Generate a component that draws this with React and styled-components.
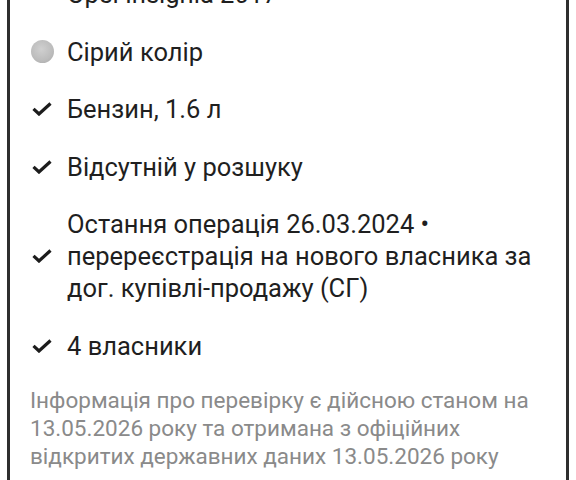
import styled, { createGlobalStyle } from 'styled-components';

const Global = createGlobalStyle`
  html, body {
    margin: 0;
    padding: 0;
    background: #ffffff;
    overflow: hidden;
  }
  body {
    font-family: Roboto, "Noto Sans", "Liberation Sans", sans-serif;
  }
`;

const Card = styled.div`
  margin: -22px 7px 0 7px;
  border-left: 3px solid #2f2f2f;
  border-right: 3px solid #2f2f2f;
  padding: 0 12px 20px 20px;
  box-sizing: border-box;
  height: 540px;
`;

const List = styled.ul`
  list-style: none;
  margin: 0;
  padding: 0;
  display: flex;
  flex-direction: column;
  gap: 25.5px;
`;

const Row = styled.li`
  display: flex;
  align-items: center;
  gap: 13px;
  padding-left: ${p => (p.$plain ? '37px' : '0')};
`;

const IconSlot = styled.span`
  flex: 0 0 24px;
  display: flex;
  align-items: center;
  justify-content: center;
  color: #1c1c1c;
`;

const ColorDot = styled.span`
  width: 23px;
  height: 23px;
  border-radius: 50%;
  background: radial-gradient(circle at 45% 40%, #d0d0d0 0%, #bcbcbc 60%, #a6a6a6 100%);
`;

const Label = styled.span`
  font-size: 25.5px;
  line-height: 32px;
  color: #1f1f1f;
`;

const Note = styled.p`
  margin: 24px 0 0 0;
  font-size: 22.5px;
  line-height: 28px;
  color: #8a8a8a;
`;

const Check = () => (
  <svg width="20" height="14" viewBox="0 0 20 14" fill="none">
    <polyline points="1.5,6.8 7,12 18.5,1.5" stroke="currentColor" strokeWidth="3.2" />
  </svg>
);

const rows = [
  { icon: 'dot', text: 'Сірий колір' },
  { icon: 'check', text: 'Бензин, 1.6 л' },
  { icon: 'check', text: 'Відсутній у розшуку' },
  { icon: 'check', text: 'Остання операція 26.03.2024 • перереєстрація на нового власника за дог. купівлі-продажу (СГ)' },
  { icon: 'check', text: '4 власники' },
];

export default function App() {
  return (
    <>
      <Global />
      <Card>
        <List>
          <Row $plain>
            <Label>Opel Insignia 2017</Label>
          </Row>
          {rows.map(r => (
            <Row key={r.text}>
              <IconSlot>{r.icon === 'dot' ? <ColorDot /> : <Check />}</IconSlot>
              <Label>{r.text}</Label>
            </Row>
          ))}
        </List>
        <Note>
          Інформація про перевірку є дійсною станом на 13.05.2026 року та отримана з офіційних відкритих державних даних 13.05.2026 року
        </Note>
      </Card>
    </>
  );
}
